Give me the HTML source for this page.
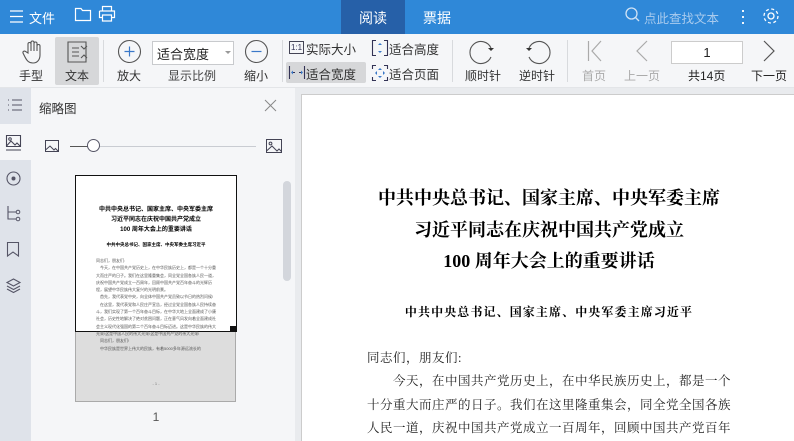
<!DOCTYPE html>
<html style="width:794px;height:441px;overflow:hidden"><head><meta charset="utf-8"><style>
*{margin:0;padding:0;box-sizing:border-box}
body{width:794px;height:441px;overflow:hidden;position:relative;background:#eceef1;font-family:"Liberation Sans","Noto Sans CJK SC",sans-serif;font-size:12px;color:#333}
.a{position:absolute}
.top{left:0;top:0;width:794px;height:34px;background:#2f88d8;color:#fff}
.tb{left:0;top:34px;width:794px;height:54px;background:#f5f6f8;border-bottom:1px solid #e3e5e8}
.lbl{position:absolute;font-size:12px;color:#333;text-align:center;white-space:nowrap}
.sep{position:absolute;top:40px;width:1px;height:42px;background:#d8dadd}
svg{position:absolute;overflow:visible}
.serif{font-family:"Liberation Serif","Noto Serif CJK SC",serif;white-space:nowrap}
</style></head><body>
<div class="a top">
 <svg style="left:10px;top:10px" width="14" height="13"><path d="M0 1H13M0 6.5H13M0 12H13" stroke="#fff" stroke-width="1.2"/></svg>
 <div class="a" style="left:29px;top:8px;font-size:13px">文件</div>
 <svg style="left:75px;top:7px" width="16" height="14"><path d="M0.5 1.5H6L7.5 3.5H15.5V13.5H0.5Z" fill="none" stroke="#fff" stroke-width="1.2"/></svg>
 <svg style="left:99px;top:6px" width="16" height="16"><path d="M3.5 5V0.5H12.5V5M0.5 5H15.5V11.5H12.5M3.5 11.5H0.5V5M3.5 9H12.5V15H3.5Z" fill="none" stroke="#fff" stroke-width="1.2"/></svg>
 <div class="a" style="left:341px;top:0;width:64px;height:34px;background:#2660a8"></div>
 <div class="a" style="left:359px;top:8px;font-size:14px">阅读</div>
 <div class="a" style="left:423px;top:8px;font-size:14px">票据</div>
 <svg style="left:625px;top:7px" width="15" height="16"><circle cx="6.5" cy="6.5" r="5.5" fill="none" stroke="#cfe2f5" stroke-width="1.3"/><path d="M10.5 10.5L14 14" stroke="#cfe2f5" stroke-width="1.3"/></svg>
 <div class="a" style="left:644px;top:8px;font-size:12.5px;color:#a9cbee">点此查找文本</div>
 <div class="a" style="left:742px;top:8px;width:2px;height:18px;background:radial-gradient(circle,#fff 1px,transparent 1.2px) 0 0/2px 6px"></div>
 <svg style="left:762px;top:7px" width="18" height="18"><circle cx="9" cy="9" r="3" fill="none" stroke="#fff" stroke-width="1.3"/><circle cx="9" cy="9" r="7" fill="none" stroke="#fff" stroke-width="1.3" stroke-dasharray="3 2.5"/></svg>
</div>
<div class="a tb"></div>
<svg style="left:22px;top:40px" width="22" height="24"><path d="M6 13V4a1.5 1.5 0 013 0v7V2.5a1.5 1.5 0 013 0V11V3.5a1.5 1.5 0 013 0V11V6a1.5 1.5 0 013 0v9c0 5-3 8-7 8s-6-2-8-6l-2-4a1.5 1.5 0 012.5-1.5z" fill="none" stroke="#555" stroke-width="1.1"/></svg>
<div class="lbl" style="left:19px;top:67px">手型</div>
<div class="a" style="left:55px;top:37px;width:44px;height:48px;background:#d6d7d9;border-radius:2px"></div>
<svg style="left:67px;top:41px" width="20" height="22"><path d="M1 1H19V21H1Z" fill="none" stroke="#555" stroke-width="1.1"/><path d="M5 7H12M5 11H12M5 15H12M14 5l3 3 3-3M14 17l3-3 3 3" fill="none" stroke="#555" stroke-width="1.1"/></svg>
<div class="lbl" style="left:65px;top:67px">文本</div>
<div class="sep" style="left:103px"></div>
<svg style="left:118px;top:40px" width="23" height="23"><circle cx="11.5" cy="11.5" r="11" fill="none" stroke="#555" stroke-width="1.1"/><path d="M6.5 11.5H16.5M11.5 6.5V16.5" stroke="#3a78c8" stroke-width="1.2"/></svg>
<div class="lbl" style="left:117px;top:67px">放大</div>
<div class="a" style="left:152px;top:41px;width:82px;height:24px;background:#fff;border:1px solid #c8cacd;font-size:13px;padding:2px 4px;color:#222">适合宽度</div>
<div class="a" style="left:225px;top:51px;border:3px solid transparent;border-top:3px solid #999"></div>
<div class="lbl" style="left:168px;top:67px;color:#444">显示比例</div>
<svg style="left:245px;top:40px" width="23" height="23"><circle cx="11.5" cy="11.5" r="11" fill="none" stroke="#555" stroke-width="1.1"/><path d="M6.5 11.5H16.5" stroke="#3a78c8" stroke-width="1.2"/></svg>
<div class="lbl" style="left:244px;top:67px">缩小</div>
<div class="sep" style="left:282px"></div>
<div class="a" style="left:289px;top:41px;width:15px;height:13px;border:1px solid #445;font-size:8px;line-height:11px;text-align:center;color:#335">1:1</div>
<div class="lbl" style="left:306px;top:39px;font-size:12.5px">实际大小</div>
<div class="a" style="left:286px;top:62px;width:80px;height:21px;background:#d6d7d9;border-radius:2px"></div>
<svg style="left:289px;top:66px" width="16" height="13"><path d="M0.5 0V13M15.5 0V13M3 6.5H6M10 6.5H13" stroke="#335" stroke-width="1.1" fill="none"/><path d="M2 6.5l2-2v4zM14 6.5l-2-2v4z" fill="#3a78c8"/></svg>
<div class="lbl" style="left:306px;top:64px;font-size:12.5px">适合宽度</div>
<svg style="left:372px;top:40px" width="16" height="16"><path d="M4 0.5H0.5V15.5H4M12 0.5H15.5V15.5H12" stroke="#335" stroke-width="1.1" fill="none"/><path d="M8 3l-2 2h4zM8 13l-2-2h4z" fill="#3a78c8"/></svg>
<div class="lbl" style="left:389px;top:39px;font-size:12.5px">适合高度</div>
<svg style="left:372px;top:65px" width="16" height="16"><path d="M0.5 4V0.5H4M12 0.5H15.5V4M15.5 12V15.5H12M4 15.5H0.5V12" stroke="#335" stroke-width="1.1" fill="none"/><path d="M8 3l-2 2h4zM8 13l-2-2h4zM3 8l2-2v4zM13 8l-2-2v4z" fill="#3a78c8"/></svg>
<div class="lbl" style="left:389px;top:64px;font-size:12.5px">适合页面</div>
<div class="sep" style="left:452px"></div>
<svg style="left:471px;top:40px" width="24" height="24"><path d="M20 8A11 11 0 1 0 20 17" fill="none" stroke="#555" stroke-width="1.1"/><path d="M20 11l-3-3h6z" fill="#333"/></svg>
<div class="lbl" style="left:465px;top:67px">顺时针</div>
<svg style="left:525px;top:40px" width="24" height="24"><path d="M4 8A11 11 0 1 1 4 17" fill="none" stroke="#555" stroke-width="1.1"/><path d="M4 11l-3-3h6z" fill="#333"/></svg>
<div class="lbl" style="left:519px;top:67px">逆时针</div>
<div class="sep" style="left:567px"></div>
<svg style="left:588px;top:41px" width="14" height="20"><path d="M0.5 0V20M13 0L4 10L13 20" fill="none" stroke="#aaa" stroke-width="1.2"/></svg>
<div class="lbl" style="left:582px;top:67px;color:#aaa">首页</div>
<svg style="left:636px;top:41px" width="12" height="20"><path d="M11 0L1 10L11 20" fill="none" stroke="#aaa" stroke-width="1.2"/></svg>
<div class="lbl" style="left:624px;top:67px;color:#aaa">上一页</div>
<div class="a" style="left:671px;top:41px;width:72px;height:23px;background:#fff;border:1px solid #ccc;text-align:center;font-size:13px;line-height:21px;color:#222">1</div>
<div class="lbl" style="left:688px;top:67px;color:#222">共14页</div>
<svg style="left:763px;top:41px" width="12" height="20"><path d="M1 0L11 10L1 20" fill="none" stroke="#555" stroke-width="1.2"/></svg>
<div class="lbl" style="left:751px;top:67px;color:#222">下一页</div>
<div class="a" style="left:0;top:88px;width:31px;height:353px;background:#dfe3ea"></div>
<div class="a" style="left:0;top:124px;width:31px;height:36px;background:#f5f6f8"></div>
<svg style="left:7px;top:99px" width="16" height="12"><path d="M5 1H15M5 6H15M5 11H15M1 1H2M1 6H2M1 11H2" stroke="#556" stroke-width="1.1"/></svg>
<svg style="left:6px;top:135px" width="15" height="16"><path d="M0.5 0.5H14.5V11.5H0.5ZM0.5 11L5 6l4 4 2-2 3.5 3.5M0 15H15" fill="none" stroke="#445" stroke-width="1.1"/><circle cx="4" cy="4" r="1.3" fill="none" stroke="#445"/></svg>
<svg style="left:6px;top:171px" width="15" height="15"><circle cx="7.5" cy="7.5" r="6.5" fill="none" stroke="#556" stroke-width="1.1"/><circle cx="7.5" cy="7.5" r="2" fill="#556"/></svg>
<svg style="left:7px;top:206px" width="14" height="16"><path d="M1 0V13H9M1 6H9" fill="none" stroke="#556" stroke-width="1.1"/><circle cx="11" cy="6" r="1.8" fill="none" stroke="#556"/><circle cx="11" cy="13" r="1.8" fill="none" stroke="#556"/></svg>
<svg style="left:7px;top:242px" width="12" height="15"><path d="M0.5 0.5H11.5V14L6 10L0.5 14Z" fill="none" stroke="#556" stroke-width="1.1"/></svg>
<svg style="left:6px;top:278px" width="15" height="15"><path d="M7.5 1L14 4.5L7.5 8L1 4.5ZM1 8L7.5 11.5L14 8M1 11L7.5 14.5L14 11" fill="none" stroke="#556" stroke-width="1.1"/></svg>
<div class="a" style="left:31px;top:88px;width:264px;height:353px;background:#f5f6f8"></div>
<div class="a" style="left:39px;top:98px;font-size:12.5px;color:#333">缩略图</div>
<svg style="left:265px;top:100px" width="11" height="11"><path d="M0 0L11 11M11 0L0 11" stroke="#888" stroke-width="1"/></svg>
<svg style="left:45px;top:140px" width="14" height="12"><path d="M0.5 0.5H13.5V11.5H0.5ZM0.5 10L5 6l4 4 1.5-1.5 3 3" fill="none" stroke="#445"/></svg>
<div class="a" style="left:70px;top:146px;width:186px;height:1px;background:#c9ccd2"></div>
<div class="a" style="left:70px;top:146px;width:20px;height:1px;background:#555"></div>
<div class="a" style="left:87px;top:139px;width:13px;height:13px;border-radius:50%;background:#fff;border:1px solid #556"></div>
<svg style="left:266px;top:139px" width="16" height="14"><path d="M0.5 0.5H15.5V13.5H0.5ZM0.5 12L6 7l5 5 2-2 2.5 2.5" fill="none" stroke="#445"/><circle cx="4.5" cy="4.5" r="1.4" fill="none" stroke="#445"/></svg>
<div class="a" style="left:283px;top:181px;width:8px;height:100px;background:#d3d6dc;border-radius:4px"></div>
<div class="a" style="left:75px;top:330px;width:161px;height:72px;background:#ddd;border:1px solid #aaa"></div>
<div class="a" style="left:75px;top:175px;width:162px;height:157px;background:#fff;border:1px solid #111"></div>
<div class="a" style="left:230px;top:326px;width:6px;height:6px;background:#111"></div>
<div class="a" style="left:76px;top:205px;width:160px;text-align:center;font-size:6px;line-height:10px;font-weight:bold;color:#000">中共中央总书记、国家主席、中央军委主席<br>习近平同志在庆祝中国共产党成立<br>100 周年大会上的重要讲话</div>
<div class="a" style="left:76px;top:242px;width:160px;text-align:center;font-size:4.5px;font-weight:bold;color:#000">中共中央总书记、国家主席、中央军委主席习近平</div>
<div class="a" style="left:96px;top:257px;width:120px;font-size:4px;line-height:7.3px;color:#555">同志们，朋友们:<br>　今天，在中国共产党历史上，在中华民族历史上，都是一个十分重大而庄严的日子。我们在这里隆重集会，同全党全国各族人民一道，庆祝中国共产党成立一百周年，回顾中国共产党百年奋斗的光辉历程，展望中华民族伟大复兴的光明前景。<br>　首先，我代表党中央，向全体中国共产党员致以节日的热烈问候!<br>　在这里，我代表党和人民庄严宣告，经过全党全国各族人民持续奋斗，我们实现了第一个百年奋斗目标，在中华大地上全面建成了小康社会，历史性地解决了绝对贫困问题，正在意气风发向着全面建成社会主义现代化强国的第二个百年奋斗目标迈进。这是中华民族的伟大光荣!这是中国人民的伟大光荣!这是中国共产党的伟大光荣!<br>　同志们，朋友们!<br>　中华民族是世界上伟大的民族，有着5000多年源远流长的</div>
<div class="a" style="left:76px;top:381px;width:160px;text-align:center;font-size:4px;color:#777">- 1 -</div>
<div class="a" style="left:76px;top:410px;width:160px;text-align:center;font-size:12px;color:#555">1</div>
<div class="a" style="left:295px;top:88px;width:499px;height:353px;background:#e9ebee"></div>
<div class="a" style="left:301px;top:94px;width:493px;height:347px;background:#fff;border-left:1px solid #ccc;border-top:1px solid #ccc"></div>
<div class="a serif" style="left:301px;top:183px;width:496px;text-align:center;font-size:18px;line-height:31.5px;font-weight:bold;color:#000">中共中央总书记、国家主席、中央军委主席<br>习近平同志在庆祝中国共产党成立<br>100 周年大会上的重要讲话</div>
<div class="a serif" style="left:301px;top:303px;width:496px;text-align:center;font-size:12px;font-weight:bold;color:#000;letter-spacing:1.1px">中共中央总书记、国家主席、中央军委主席习近平</div>
<div class="a serif" style="left:367px;top:347px;width:380px;font-size:12.5px;line-height:23.4px;color:#222;letter-spacing:0.5px">同志们，朋友们:<br>　　今天，在中国共产党历史上，在中华民族历史上，都是一个<br>十分重大而庄严的日子。我们在这里隆重集会，同全党全国各族<br>人民一道，庆祝中国共产党成立一百周年，回顾中国共产党百年</div>
</body></html>
